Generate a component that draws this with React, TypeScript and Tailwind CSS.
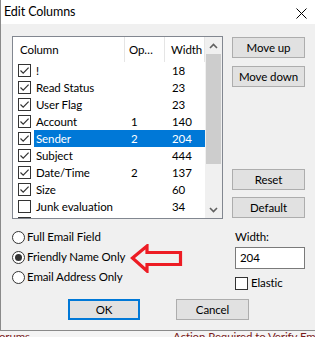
import React from 'react';

const rows = [
  { name: '!', op: '', width: '18', checked: true },
  { name: 'Read Status', op: '', width: '23', checked: true },
  { name: 'User Flag', op: '', width: '23', checked: true },
  { name: 'Account', op: '1', width: '140', checked: true },
  { name: 'Sender', op: '2', width: '204', checked: true, selected: true },
  { name: 'Subject', op: '', width: '444', checked: true },
  { name: 'Date/Time', op: '2', width: '137', checked: true },
  { name: 'Size', op: '', width: '60', checked: true },
  { name: 'Junk evaluation', op: '', width: '34', checked: false },
  { name: '', op: '', width: '', checked: false },
];

function CheckBox({ checked }: { checked: boolean }) {
  return (
    <div className="flex h-[13px] w-[13px] shrink-0 items-center justify-center border border-[#333333] bg-white">
      {checked ? (
        <svg width="11" height="11" viewBox="0 0 11 11">
          <path d="M1.5 5.5 L4.2 8.2 L9.6 2.6" fill="none" stroke="#333333" strokeWidth="1.2" />
        </svg>
      ) : null}
    </div>
  );
}

function Radio({ checked, label }: { checked?: boolean; label: string }) {
  return (
    <div className="flex h-[20px] items-center">
      <div className="flex h-[13px] w-[13px] items-center justify-center rounded-full border border-[#333333] bg-white">
        {checked ? <div className="h-[7px] w-[7px] rounded-full bg-[#333333]" /> : null}
      </div>
      <span className="ml-[2px] text-black">{label}</span>
    </div>
  );
}

function Btn({ label, className = '' }: { label: string; className?: string }) {
  return (
    <div className={`flex h-[21px] items-center justify-center border border-[#adadad] bg-[#e1e1e1] text-black ${className}`}>
      {label}
    </div>
  );
}

function Chevron({ up }: { up?: boolean }) {
  return (
    <svg width="9" height="6" viewBox="0 0 9 6">
      <path d={up ? 'M1 5 L4.5 1.5 L8 5' : 'M1 1 L4.5 4.5 L8 1'} fill="none" stroke="#606060" strokeWidth="1.6" />
    </svg>
  );
}

export default function App() {
  return (
    <div className="relative h-[337px] w-[315px] overflow-hidden bg-[#f4f4f4] font-['Lato','Liberation_Sans',sans-serif] text-[11.5px] leading-[14px] tracking-[-0.1px]">
      <div className="flex h-[331px] flex-col border-l border-b border-[#8a8a8a] bg-[#f0f0f0]">
        {/* title bar */}
        <div className="flex h-[24px] shrink-0 items-center justify-between bg-white pl-[3px] pr-[8px]">
          <span className="text-[12.5px] text-black">Edit Columns</span>
          <svg width="11" height="11" viewBox="0 0 11 11" className="mt-[2px]">
            <path d="M0.5 0.5 L10.5 10.5 M10.5 0.5 L0.5 10.5" stroke="#000" strokeWidth="1" />
          </svg>
        </div>

        <div className="flex h-[275px] shrink-0 pl-[11px] pt-[12px]">
          <div className="flex w-[211px] flex-col">
            {/* list */}
            <div className="flex h-[183px] overflow-hidden border border-[#828790] bg-white">
              <div className="flex w-[192px] flex-col">
                <div className="flex h-[25px] shrink-0 items-center">
                  <div className="flex h-full w-[112px] items-center border-r border-[#e5e5e5] pl-[7px]">Column</div>
                  <div className="flex h-full w-[40px] items-center border-r border-[#e5e5e5] pl-[4px]">Op…</div>
                  <div className="flex h-full w-[40px] items-center border-r border-[#e5e5e5] pl-[6px]">Width</div>
                </div>
                {rows.map((r, i) => (
                  <div key={i} className="flex h-[17px] shrink-0 items-center">
                    <div className="flex w-[21px] items-center pl-[5px]">
                      <CheckBox checked={r.checked} />
                    </div>
                    <div className={`flex h-full w-[171px] items-center ${r.selected ? 'bg-[#0078d7] text-white' : 'text-black'}`}>
                      <div className="w-[91px] pl-[2px]">{r.name}</div>
                      <div className="w-[40px] pl-[6px]">{r.op}</div>
                      <div className="w-[40px] pl-[7px]">{r.width}</div>
                    </div>
                  </div>
                ))}
              </div>
              {/* scrollbar */}
              <div className="flex w-[17px] flex-col bg-[#f0f0f0]">
                <div className="flex h-[17px] items-center justify-center">
                  <Chevron up />
                </div>
                <div className="mx-[1px] h-[110px] bg-[#cdcdcd]" />
                <div className="flex-1" />
                <div className="flex h-[17px] items-center justify-center">
                  <Chevron />
                </div>
              </div>
            </div>

            <div className="mt-[8px] flex flex-col">
              <Radio label="Full Email Field" />
              <Radio label="Friendly Name Only" checked />
              <Radio label="Email Address Only" />
            </div>
          </div>

          <div className="ml-[9px] flex w-[73px] flex-col">
            <Btn label="Move up" className="mt-[1px]" />
            <Btn label="Move down" className="mt-[8px]" />
            <Btn label="Reset" className="mt-[82px]" />
            <Btn label="Default" className="mt-[7px]" />
            <div className="ml-[3px] mt-[12px] text-black">Width:</div>
            <div className="ml-[3px] mt-[3px] flex h-[22px] items-center border border-[#7a7a7a] bg-white pl-[4px] text-black">
              204
            </div>
            <div className="ml-[3px] mt-[7px] flex items-center">
              <CheckBox checked={false} />
              <span className="ml-[3px] text-black">Elastic</span>
            </div>
          </div>
        </div>

        <div className="flex pl-[67px]">
          <div className="flex h-[21px] w-[72px] items-center justify-center border-2 border-[#0078d7] bg-[#e1e1e1] text-black">OK</div>
          <Btn label="Cancel" className="ml-[36px] w-[73px]" />
        </div>
      </div>

      {/* window underneath */}
      <div className="flex h-[6px] items-start text-[#7b1a1a]">
        <span className="-ml-[7px] -mt-[1px]">Forums</span>
        <span className="ml-[143px] -mt-[1px] whitespace-nowrap">Action Required to Verify Em</span>
      </div>

      {/* red annotation arrow */}
      <svg className="absolute left-[130px] top-[244px]" width="53" height="29" viewBox="0 0 53 29">
        <path d="M2.5 14 L17 2 L17 8.5 L50.5 8.5 L50.5 20.5 L17 20.5 L17 27 Z" fill="none" stroke="#ed1c24" strokeWidth="3.2" strokeLinejoin="miter" />
      </svg>
    </div>
  );
}
